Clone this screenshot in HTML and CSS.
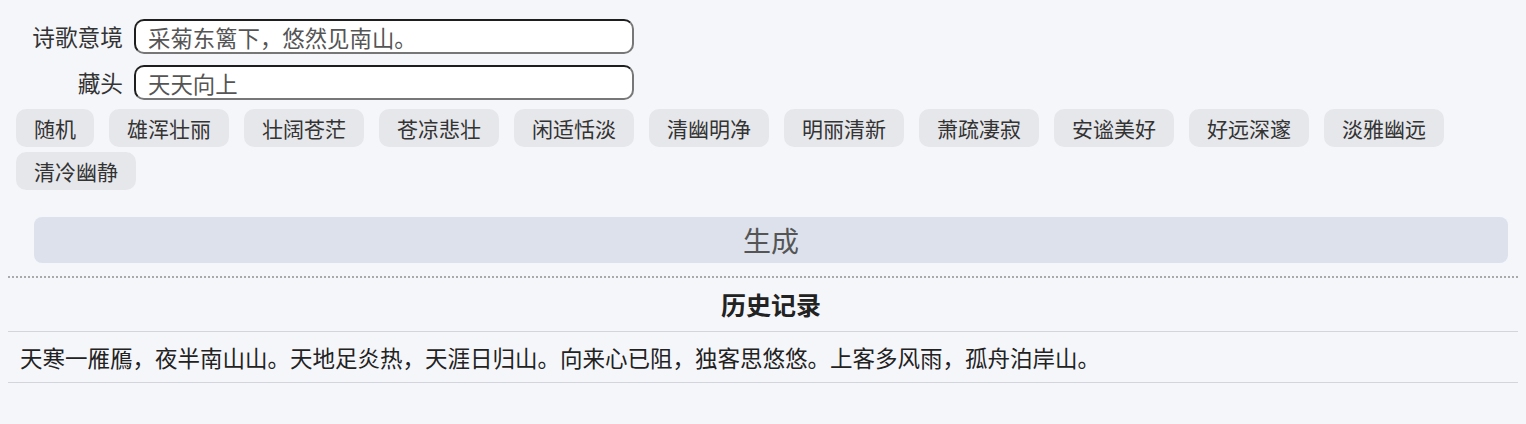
FILE: index.html
```html
<!DOCTYPE html>
<html lang="zh-CN">
<head>
<meta charset="utf-8">
<title>诗歌生成</title>
<link rel="stylesheet" href="styles.css">
</head>
<body>
<div class="page">
  <div class="form">
    <div class="field">
      <label class="label">诗歌意境</label>
      <input class="input" type="text" value="采菊东篱下，悠然见南山。">
    </div>
    <div class="field">
      <label class="label">藏头</label>
      <input class="input" type="text" value="天天向上">
    </div>
    <div class="tags">
      <span class="tag">随机</span>
      <span class="tag">雄浑壮丽</span>
      <span class="tag">壮阔苍茫</span>
      <span class="tag">苍凉悲壮</span>
      <span class="tag">闲适恬淡</span>
      <span class="tag">清幽明净</span>
      <span class="tag">明丽清新</span>
      <span class="tag">萧疏凄寂</span>
      <span class="tag">安谧美好</span>
      <span class="tag">好远深邃</span>
      <span class="tag">淡雅幽远</span>
      <span class="tag">清冷幽静</span>
    </div>
    <button class="generate" type="button">生成</button>
  </div>
  <div class="history">
    <div class="history-title">历史记录</div>
    <div class="history-item">天寒一雁鴈，夜半南山山。天地足炎热，天涯日归山。向来心已阻，独客思悠悠。上客多风雨，孤舟泊岸山。</div>
  </div>
</div>
</body>
</html>
```
FILE: styles.css
```css
html {
  background: #f5f6fa;
  overflow: hidden;
}
body {
  margin: 8px;
  font-family: "Microsoft YaHei", "Noto Sans CJK SC", "Noto Sans", sans-serif;
  color: #222;
}
.page {
  margin-right: -8px;
}
.form {
  padding-top: 11px;
}
.field {
  display: flex;
  align-items: center;
  margin-bottom: 11px;
}
.field:nth-child(2) {
  margin-bottom: 9px;
}
.label {
  width: 115px;
  text-align: right;
  font-size: 22.7px;
  line-height: 35px;
  color: #333;
  margin-right: 11px;
}
.input {
  box-sizing: border-box;
  width: 500px;
  height: 35px;
  border: 2px solid;
  border-color: #1e1e1e #777 #777 #1e1e1e;
  border-radius: 10px;
  background: #fff;
  padding: 0 12px;
  font-family: inherit;
  font-size: 22.4px;
  color: #555;
  outline: none;
}
.tags {
  display: flex;
  flex-wrap: wrap;
  gap: 5px 15px;
  padding-left: 8px;
  width: 1470px;
}
.tag {
  box-sizing: border-box;
  height: 38px;
  line-height: 38px;
  padding: 0 18px;
  font-size: 21px;
  border-radius: 10px;
  background: #e6e7eb;
  color: #333;
  white-space: nowrap;
}
.generate {
  display: block;
  box-sizing: border-box;
  margin: 27px 18px 0 26px;
  width: calc(100% - 44px);
  height: 46px;
  border: none;
  border-radius: 8px;
  background: #dce1ec;
  color: #555;
  font-family: inherit;
  font-size: 28px;
  padding: 0;
}
.history {
  margin-top: 13px;
  margin-right: -16px;
  border-top: 2px dotted #aaa;
}
.history-title {
  height: 53px;
  line-height: 53px;
  padding-right: 8px;
  text-align: center;
  font-size: 25px;
  font-weight: bold;
  color: #222;
  border-bottom: 1px solid #d4d5dc;
}
.history-item {
  height: 50px;
  line-height: 50px;
  padding-left: 12px;
  font-size: 22.5px;
  color: #222;
  border-bottom: 1px solid #d4d5dc;
}
```
